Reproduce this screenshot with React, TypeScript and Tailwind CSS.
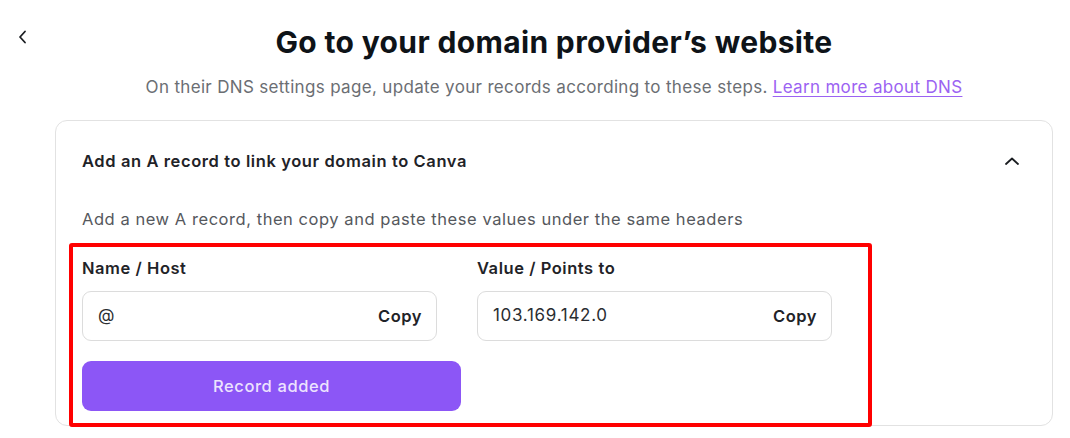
import React from "react";

function ChevronLeft() {
  return (
    <svg width="12" height="16" viewBox="0 0 12 16" fill="none">
      <path d="M8 2.5L3 8l5 5.5" stroke="#1a1d21" strokeWidth="1.8" strokeLinecap="round" strokeLinejoin="round" />
    </svg>
  );
}

function ChevronUp() {
  return (
    <svg width="16" height="10" viewBox="0 0 16 10" fill="none">
      <path d="M2 8l6-5.5L14 8" stroke="#1a1d21" strokeWidth="1.8" strokeLinecap="round" strokeLinejoin="round" />
    </svg>
  );
}

function Field({ label, value }: { label: string; value: string }) {
  return (
    <div className="flex flex-col w-[355px]">
      <div className="h-[24px] flex items-center text-[16.5px] font-semibold tracking-[0.55px] text-[#1f2328]">{label}</div>
      <div className="mt-[11px] h-[50px] rounded-[9px] border border-[#dcdcdc] bg-white flex items-center justify-between pl-[15px] pr-[14px]">
        <span className="text-[17px] tracking-[0.7px] text-[#2a2d31]">{value}</span>
        <span className="text-[16.5px] font-semibold tracking-[0.5px] text-[#1f2328]">Copy</span>
      </div>
    </div>
  );
}

export default function App() {
  return (
    <div className="w-[1070px] h-[438px] bg-white overflow-hidden flex" style={{ fontFamily: "Inter, 'Noto Sans', sans-serif" }}>
      <div className="w-[55px] shrink-0 pl-[17px] pt-[29px]">
        <ChevronLeft />
      </div>
      <div className="w-[998px] shrink-0 flex flex-col">
        <h1 className="mt-[23px] h-[38px] flex items-center justify-center text-[30px] font-bold tracking-[0.35px] text-[#0e1318] whitespace-nowrap">
          Go to your domain provider’s website
        </h1>
        <p className="mt-[15px] h-[24px] flex items-center justify-center text-[17px] tracking-[0.33px] text-[#6b6e73] whitespace-nowrap">
          <span>On their DNS settings page, update your records according to these steps.</span>
          <span className="ml-[5px] text-[#9b63f2] underline underline-offset-[3px]">Learn more about DNS</span>
        </p>
        <div className="relative mt-[20px] h-[306px] rounded-[12px] border border-[#e2e2e2] bg-white px-[26px]">
          <div className="h-[80px] flex items-center justify-between pr-[6px]">
            <span className="text-[16.5px] font-semibold tracking-[0.6px] text-[#1f2328]">Add an A record to link your domain to Canva</span>
            <ChevronUp />
          </div>
          <div className="mt-[6px] h-[24px] flex items-center text-[16.5px] tracking-[0.55px] text-[#55585d] whitespace-nowrap">
            Add a new A record, then copy and paste these values under the same headers
          </div>
          <div className="mt-[25px] flex gap-[40px]">
            <Field label="Name / Host" value="@" />
            <Field label="Value / Points to" value="103.169.142.0" />
          </div>
          <button className="mt-[20px] w-[379px] h-[50px] rounded-[9px] bg-[#8c56f6] text-[16.5px] font-medium tracking-[0.6px] text-[#ece3fe]">
            Record added
          </button>
          <div className="absolute left-[13px] top-[122px] w-[803px] h-[184px] border-[4px] border-[#ff0000] rounded-[3px] pointer-events-none" />
        </div>
      </div>
    </div>
  );
}
